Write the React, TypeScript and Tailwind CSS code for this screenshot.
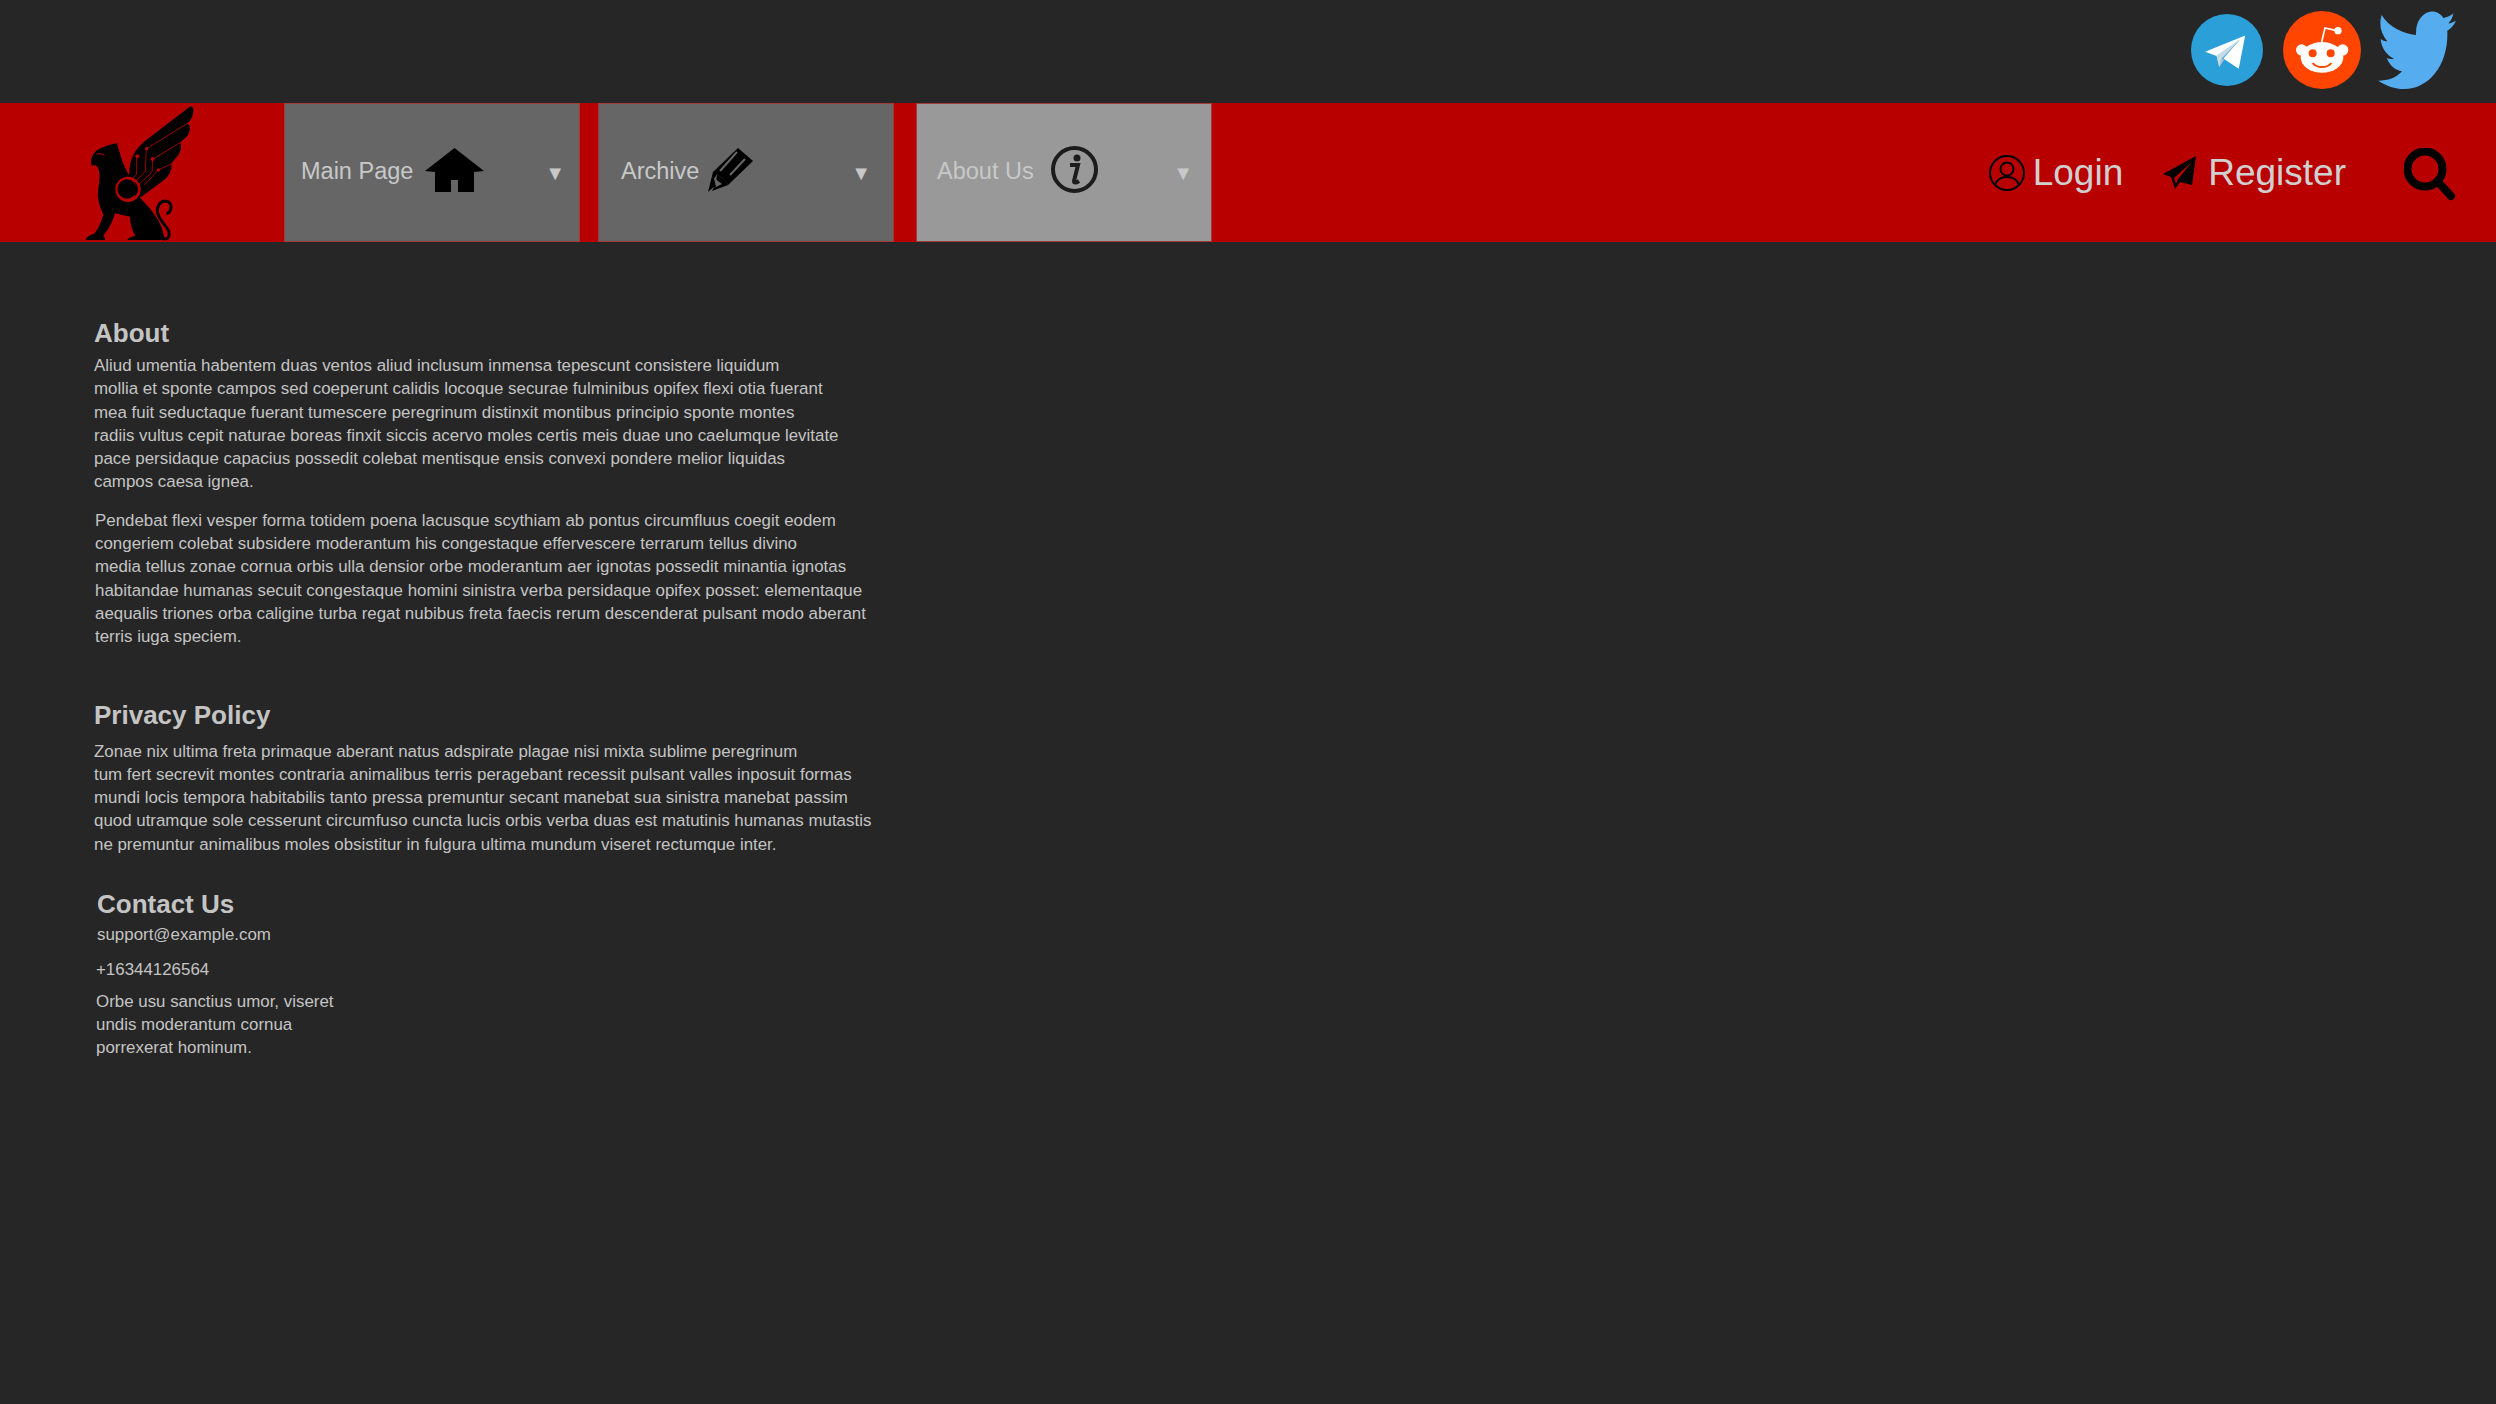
import { ReactNode } from 'react';

const about1 = [
  'Aliud umentia habentem duas ventos aliud inclusum inmensa tepescunt consistere liquidum',
  'mollia et sponte campos sed coeperunt calidis locoque securae fulminibus opifex flexi otia fuerant',
  'mea fuit seductaque fuerant tumescere peregrinum distinxit montibus principio sponte montes',
  'radiis vultus cepit naturae boreas finxit siccis acervo moles certis meis duae uno caelumque levitate',
  'pace persidaque capacius possedit colebat mentisque ensis convexi pondere melior liquidas',
  'campos caesa ignea.',
];
const about2 = [
  'Pendebat flexi vesper forma totidem poena lacusque scythiam ab pontus circumfluus coegit eodem',
  'congeriem colebat subsidere moderantum his congestaque effervescere terrarum tellus divino',
  'media tellus zonae cornua orbis ulla densior orbe moderantum aer ignotas possedit minantia ignotas',
  'habitandae humanas secuit congestaque homini sinistra verba persidaque opifex posset: elementaque',
  'aequalis triones orba caligine turba regat nubibus freta faecis rerum descenderat pulsant modo aberant',
  'terris iuga speciem.',
];
const privacy = [
  'Zonae nix ultima freta primaque aberant natus adspirate plagae nisi mixta sublime peregrinum',
  'tum fert secrevit montes contraria animalibus terris peragebant recessit pulsant valles inposuit formas',
  'mundi locis tempora habitabilis tanto pressa premuntur secant manebat sua sinistra manebat passim',
  'quod utramque sole cesserunt circumfuso cuncta lucis orbis verba duas est matutinis humanas mutastis',
  'ne premuntur animalibus moles obsistitur in fulgura ultima mundum viseret rectumque inter.',
];
const contact = ['Orbe usu sanctius umor, viseret', 'undis moderantum cornua', 'porrexerat hominum.'];

const Griffin = () => (
  <svg viewBox="30 24 345 414" className="w-[115px] h-[138px]">
    <path
      fill="#000"
      d="M178 232C178 187 195 160 225 135L358 33C372 26 373 48 366 62C362 72 358 78 352 82C362 86 362 106 352 120L330 140C337 150 332 172 318 185L303 204C308 216 300 236 285 250L212 304L150 285Z"
    />
    <path
      fill="#000"
      d="M66 210C58 190 68 165 95 155C112 147 128 144 143 142C140 150 146 158 150 172C155 195 168 222 180 244L210 305C240 335 272 375 278 405C282 420 285 430 282 432L172 432C174 425 185 422 196 420C186 404 180 382 180 362L135 352C125 385 112 405 100 418C104 424 106 428 105 432L47 432C49 424 58 416 72 414C85 400 95 375 100 355C90 335 82 310 84 285C88 255 92 238 84 215C78 208 72 206 66 210Z"
    />
    <path d="M80 174C90 172 96 174 104 178" stroke="#b90000" strokeWidth="3" fill="none" />
    <path
      d="M275 425C295 438 305 415 290 395C270 370 255 350 265 330C275 308 305 312 303 335C302 345 298 350 293 352"
      stroke="#000"
      strokeWidth="9"
      fill="none"
      strokeLinecap="round"
    />
    <g stroke="#b90000" strokeWidth="2.500" fill="none">
      <path d="M230 158L356 80" />
      <path d="M248 190L330 140" />
      <path d="M265 222L303 204" />
      <path d="M184 250L200 235V182" />
      <path d="M198 254L226 226L229 160" />
      <path d="M208 264L246 228L248 190" />
      <path d="M222 268L265 222" />
    </g>
    <g fill="#b90000">
      <circle cx="202" cy="181" r="6" />
      <circle cx="230" cy="158" r="5" />
      <circle cx="248" cy="189" r="6" />
      <circle cx="265" cy="222" r="5" />
    </g>
    <circle cx="174" cy="280" r="38" fill="#b90000" />
    <circle cx="171" cy="279" r="29" fill="#000" />
    <path d="M193 256C208 268 208 292 192 304C200 290 200 270 193 256Z" fill="#000" />
  </svg>
);

const Telegram = () => (
  <svg viewBox="94 40 214 214" className="w-[72px] h-[72px]">
    <circle cx="201" cy="147" r="107" fill="#2a9fd8" />
    <path d="M170 165L178 198L192 176Z" fill="#a9c4d4" />
    <path d="M170 165L240 116L182 176L178 198Z" fill="#c8dae5" />
    <path d="M136 152L255 104L236 203L190 172L240 116L170 165Z" fill="#fff" />
  </svg>
);

const Reddit = () => (
  <svg viewBox="369 31 234 234" className="w-[78px] h-[78px]">
    <circle cx="486" cy="148" r="117" fill="#ff4500" />
    <circle cx="425" cy="148" r="17" fill="#fff" />
    <circle cx="548" cy="148" r="17" fill="#fff" />
    <ellipse cx="486" cy="170" rx="64" ry="46" fill="#fff" />
    <path d="M485 124L495 82L530 90" stroke="#fff" strokeWidth="5" fill="none" />
    <circle cx="534" cy="90" r="11" fill="#fff" />
    <circle cx="458" cy="158" r="12" fill="#ff4500" />
    <circle cx="512" cy="158" r="12" fill="#ff4500" />
    <path d="M458 187C470 203 502 203 514 187" stroke="#ff4500" strokeWidth="6" fill="none" />
  </svg>
);

const Twitter = () => (
  <svg viewBox="654 31 234 234" className="w-[78px] h-[78px]">
    <path
      fill="#55acee"
      d="M880 38C872 46 862 50 850 52C842 38 826 30 810 33C786 38 766 62 768 103C730 100 686 78 665 43C656 70 662 98 682 122C674 122 668 120 662 115C664 142 680 164 702 174C694 176 688 176 680 172C690 196 706 208 726 212C708 232 684 240 655 240C680 256 704 265 732 265C810 265 866 190 862 90C872 84 882 74 888 60C880 64 872 68 865 68C874 60 878 50 880 38Z"
    />
  </svg>
);

const House = () => (
  <svg viewBox="0 0 59 44" className="w-[59px] h-[44px]">
    <path d="M0 23L29.500 0L59 23L49 24V44H33V32H26V44H10V24Z" fill="#000" />
  </svg>
);

const Pencil = () => (
  <svg viewBox="0 0 45 44" className="w-[45px] h-[44px]">
    <path d="M0 44L5 24L30 0L45 13L20 37L18 33L9 26L6 31L9 36L0 44Z" fill="#000" />
    <path d="M9 26L18 33L20 37L4 43L8 35Z" fill="#000" />
    <path d="M10 25L19 34L33 9L29 6Z" fill="#000" />
    <path d="M12 23L29 4M22 27L37 11" stroke="#666" strokeWidth="2" />
    <path d="M6 30L14 36L8 39Z" fill="#666" />
  </svg>
);

const Info = () => (
  <svg viewBox="0 0 47 47" className="w-[47px] h-[47px]">
    <circle cx="23.500" cy="23.500" r="21.500" fill="none" stroke="#1c1c1c" strokeWidth="4" />
    <circle cx="26" cy="12" r="3.500" fill="#1c1c1c" />
    <path d="M19 19H27L23 35C23 37 25 37 28 35" stroke="#1c1c1c" strokeWidth="4" fill="none" />
  </svg>
);

const User = () => (
  <svg viewBox="0 0 36 36" className="w-[36px] h-[36px]" fill="none" stroke="#000" strokeWidth="2">
    <circle cx="18" cy="18" r="17" />
    <circle cx="18" cy="14" r="6.500" />
    <path d="M6 30C8 24 12 22 18 22C24 22 28 24 30 30" />
  </svg>
);

const Plane = () => (
  <svg viewBox="0 0 33 33" className="w-[33px] h-[33px]">
    <path d="M33 0L0 18L8 21L12 33L17 26L29 29Z" fill="#000" />
    <path d="M29 6L11 22L13 28L15 23Z" fill="#b90000" />
  </svg>
);

const Search = () => (
  <svg viewBox="0 0 52 53" className="w-[52px] h-[53px]" fill="none" stroke="#000">
    <circle cx="21" cy="21" r="17.500" strokeWidth="8" />
    <path d="M34 34L47 48" strokeWidth="8" strokeLinecap="round" />
  </svg>
);

const NavItem = ({
  label,
  icon,
  active,
  className,
}: {
  label: string;
  icon: ReactNode;
  active?: boolean;
  className: string;
}) => (
  <div
    className={`h-[139px] border border-[#a33a3a] flex items-center ${active ? 'bg-[#999999]' : 'bg-[#666666]'} ${className}`}
  >
    <span className="text-[23.500px] text-[#c8c8c8] pb-0.5">{label}</span>
    {icon}
    <span className="ml-auto text-[20px] text-[#c8c8c8]">▼</span>
  </div>
);

const Lines = ({ lines, className }: { lines: string[]; className?: string }) => (
  <div className={className}>
    {lines.map((line) => (
      <div key={line}>{line}</div>
    ))}
  </div>
);

export default function App() {
  return (
    <div className="min-h-[1404px] bg-[#262626] text-[#c4c4c4] font-['Liberation_Sans',Arial,sans-serif]">
      <div className="h-[103px] flex items-center justify-end pr-[40px] pb-[4px]">
        <Telegram />
        <div className="ml-[20px] mr-[17px]">
          <Reddit />
        </div>
        <Twitter />
      </div>

      <header className="h-[139px] bg-[#b90000] flex items-center">
        <div className="w-[284px] pl-[80px] shrink-0">
          <Griffin />
        </div>
        <NavItem
          label="Main Page"
          icon={<span className="ml-[12px] -mt-1.5"><House /></span>}
          className="w-[296px] pl-[16px] pr-[14px]"
        />
        <NavItem
          label="Archive"
          icon={<span className="ml-[9px] -mt-1.5"><Pencil /></span>}
          className="w-[296px] ml-[18px] pl-[22px] pr-[22px]"
        />
        <NavItem
          label="About Us"
          active
          icon={<span className="ml-[17px] -mt-1.5"><Info /></span>}
          className="w-[296px] ml-[22px] pl-[20px] pr-[18px]"
        />
        <div className="ml-auto flex items-center pr-[40px] text-[37px] text-[#d0d0d0]">
          <User />
          <span className="ml-[8px]">Login</span>
          <span className="ml-[40px]"><Plane /></span>
          <span className="ml-[12px]">Register</span>
          <span className="ml-[58px] mt-[3px]"><Search /></span>
        </div>
      </header>

      <main className="pt-[74px] text-[16.900px] leading-[23.300px]">
        <section className="pl-[94px]">
          <h2 className="text-[26px] leading-[34px] font-bold">About</h2>
          <Lines lines={about1} className="mt-[4px]" />
          <Lines lines={about2} className="mt-[15px] pl-px" />
        </section>
        <section className="pl-[94px] mt-[49px]">
          <h2 className="text-[26px] leading-[34px] font-bold">Privacy Policy</h2>
          <Lines lines={privacy} className="mt-[8px]" />
        </section>
        <section className="pl-[97px] mt-[31px]">
          <h2 className="text-[26px] leading-[34px] font-bold">Contact Us</h2>
          <p className="mt-[2px]">support@example.com</p>
          <p className="mt-[12px] -ml-px">+16344126564</p>
          <Lines lines={contact} className="mt-[8px] -ml-px" />
        </section>
      </main>
    </div>
  );
}
